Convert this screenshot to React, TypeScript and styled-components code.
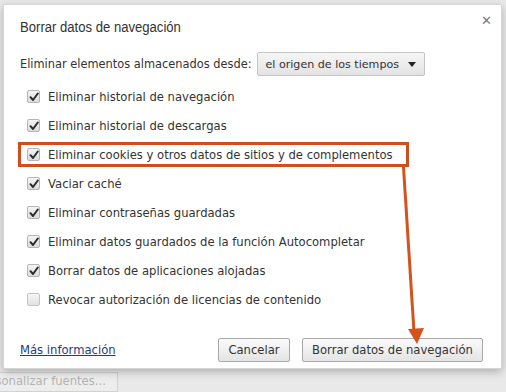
import React from 'react'
import styled, { createGlobalStyle, css } from 'styled-components'

const GlobalStyle = createGlobalStyle`
  html, body {
    margin: 0;
    padding: 0;
    background: #e9e9e9;
    overflow: hidden;
  }
  body {
    font-family: 'DejaVu Sans', 'Liberation Sans', sans-serif;
    color: #333;
  }
`

const Page = styled.div`
  width: 506px;
  height: 392px;
  position: relative;
  display: flex;
  flex-direction: column;
`

const Dialog = styled.div`
  position: relative;
  margin: 4px 4px 0 3px;
  height: 371px;
  box-sizing: border-box;
  padding: 10px 17px 0 16px;
  background: #fff;
  border: 1px solid #d6d6d6;
  border-radius: 2px;
  box-shadow: 0 3px 8px rgba(0, 0, 0, 0.25);
  display: flex;
  flex-direction: column;
`

const Title = styled.h1`
  margin: 0;
  font-family: 'Liberation Sans', Arial, sans-serif;
  font-size: 13.1px;
  font-weight: normal;
  line-height: 24px;
  color: #333;
  transform: scaleY(1.14);
  transform-origin: left center;
`

const Close = styled.span`
  position: absolute;
  top: 8px;
  right: 9px;
  font-size: 13px;
  color: #7a7a7a;
  line-height: 16px;
`

const RangeRow = styled.div`
  display: flex;
  align-items: center;
  gap: 6px;
  height: 26px;
  margin-top: 12px;
  font-size: 11.4px;
  white-space: nowrap;
`

const Select = styled.div`
  display: flex;
  align-items: center;
  justify-content: space-between;
  width: 168px;
  height: 24px;
  box-sizing: border-box;
  padding: 0 8px 0 7px;
  border: 1px solid #c4c4c4;
  border-radius: 2px;
  background: linear-gradient(#f6f6f6, #e3e3e3);
  font-size: 11.1px;
  color: #333;
`

const Caret = styled.span`
  width: 0;
  height: 0;
  border-left: 4px solid transparent;
  border-right: 4px solid transparent;
  border-top: 5px solid #222;
`

const List = styled.div`
  display: flex;
  flex-direction: column;
  margin-top: 5px;
`

const Row = styled.div`
  display: flex;
  align-items: center;
  height: 29px;
  padding-left: 7px;
`

const Label = styled.label<{ $highlight?: boolean }>`
  display: flex;
  align-items: center;
  gap: 8px;
  font-size: 11.6px;
  color: #333;
  white-space: nowrap;
  box-sizing: border-box;
  ${(p) =>
    p.$highlight &&
    css`
      height: 25px;
      margin-left: -9px;
      padding: 0 13px 0 6px;
      border: 3px solid #d24d1c;
    `}
`

const Box = styled.span<{ $checked: boolean }>`
  width: 13px;
  height: 13px;
  box-sizing: border-box;
  border: 1px solid #b5b5b5;
  border-radius: 2px;
  background: linear-gradient(#f4f4f4, #dcdcdc);
  display: flex;
  align-items: center;
  justify-content: center;
  flex-shrink: 0;
  opacity: ${(p) => (p.$checked ? 1 : 0.8)};
`

const Footer = styled.div`
  display: flex;
  align-items: center;
  margin-top: 24px;
  padding-right: 1px;
  gap: 12px;
`

const Link = styled.a`
  font-size: 11.6px;
  color: #1c3e7e;
  text-decoration: underline;
  margin-right: auto;
`

const Button = styled.button<{ $width: number }>`
  width: ${(p) => p.$width}px;
  height: 24px;
  padding: 0;
  border: 1px solid #a9a9a9;
  border-radius: 2px;
  background: linear-gradient(#fbfbfb, #e4e4e4);
  font-family: 'DejaVu Sans', 'Liberation Sans', sans-serif;
  font-size: 11.6px;
  color: #333;
`

const Behind = styled.div`
  margin-top: 3px;
  margin-left: -24px;
  width: 142px;
  height: 20px;
  box-sizing: border-box;
  border: 1px solid #d2d2d2;
  background: #ededed;
  font-size: 11.6px;
  color: #b3b3b3;
  padding: 1px 0 0 0;
  white-space: nowrap;
`

const Annotation = styled.svg`
  position: absolute;
  left: 0;
  top: 0;
  pointer-events: none;
`

const Check = () => (
  <svg width='10' height='10' viewBox='0 0 10 10'>
    <path d='M1.5 5.2 L4 8 L8.8 1.5' fill='none' stroke='#2b2b2b' strokeWidth='2' strokeLinecap='round' strokeLinejoin='round' />
  </svg>
)

const items = [
  { text: 'Eliminar historial de navegación', checked: true },
  { text: 'Eliminar historial de descargas', checked: true },
  { text: 'Eliminar cookies y otros datos de sitios y de complementos', checked: true, highlight: true },
  { text: 'Vaciar caché', checked: true },
  { text: 'Eliminar contraseñas guardadas', checked: true },
  { text: 'Eliminar datos guardados de la función Autocompletar', checked: true },
  { text: 'Borrar datos de aplicaciones alojadas', checked: true },
  { text: 'Revocar autorización de licencias de contenido', checked: false }
]

const App: React.FC = () => {
  return (
    <Page>
      <GlobalStyle />
      <Dialog>
        <Title>Borrar datos de navegación</Title>
        <Close>✕</Close>
        <RangeRow>
          <span>Eliminar elementos almacenados desde:</span>
          <Select>
            <span>el origen de los tiempos</span>
            <Caret />
          </Select>
        </RangeRow>
        <List>
          {items.map((item) => (
            <Row key={item.text}>
              <Label $highlight={item.highlight}>
                <Box $checked={item.checked}>{item.checked ? <Check /> : null}</Box>
                {item.text}
              </Label>
            </Row>
          ))}
        </List>
        <Footer>
          <Link href='#'>Más información</Link>
          <Button $width={72}>Cancelar</Button>
          <Button $width={181}>Borrar datos de navegación</Button>
        </Footer>
      </Dialog>
      <Behind>Personalizar fuentes...</Behind>
      <Annotation width='506' height='392'>
        <line x1='403.5' y1='167' x2='414' y2='332' stroke='#d4521c' strokeWidth='3' />
        <polygon points='408,329 424,328 417,344' fill='#d4521c' />
      </Annotation>
    </Page>
  )
}

export default App
